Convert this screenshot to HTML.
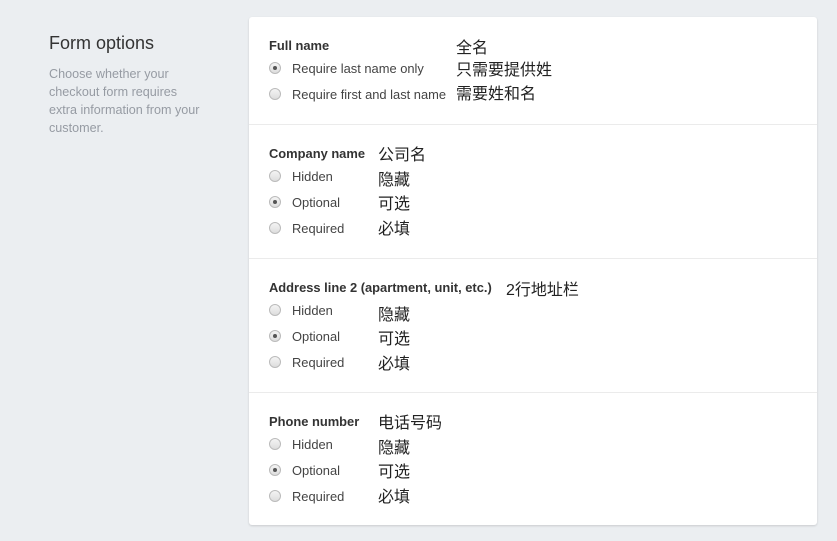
<!DOCTYPE html>
<html><head><meta charset="utf-8"><style>
*{margin:0;padding:0;box-sizing:border-box}
body{width:837px;height:541px;background:#ebeef1;font-family:"Liberation Sans","Noto Sans CJK SC",sans-serif;position:relative;overflow:hidden}
.a{position:absolute;white-space:nowrap}
h1{position:absolute;left:49px;top:33px;font-size:18px;font-weight:normal;color:#333}
.desc{position:absolute;left:49px;top:65px;white-space:nowrap;font-size:12.6px;line-height:18px;color:#969ba3}
.card{position:absolute;left:249px;top:17px;width:568px;height:508px;background:#fff;border-radius:3px;box-shadow:0 1px 2px rgba(0,0,0,.15)}
.sep{position:absolute;left:249px;width:568px;height:1px;background:#ebebeb}
.t{font-size:12.9px;font-weight:bold;color:#333}
.l{font-size:12.9px;color:#444}
.c{font-size:16px;color:#222}
.r{position:absolute;width:12px;height:12px;border-radius:50%;border:1px solid #bbb;background:linear-gradient(#f4f4f4,#ddd)}
.r.on::after{content:"";position:absolute;left:3px;top:3px;width:4px;height:4px;border-radius:50%;background:#555}
</style></head><body>
<h1>Form options</h1>
<div class="desc">Choose whether your<br>checkout form requires<br>extra information from your<br>customer.</div>
<div class="card"></div>
<div class="sep" style="top:124px"></div>
<div class="sep" style="top:258px"></div>
<div class="sep" style="top:392px"></div>

<div class="a t" style="left:269px;top:38px">Full name</div>
<div class="a c" style="left:456px;top:34px">全名</div>
<div class="r on" style="left:269px;top:62px"></div>
<div class="a l" style="left:292px;top:61px">Require last name only</div>
<div class="a c" style="left:456px;top:56px">只需要提供姓</div>
<div class="r" style="left:269px;top:88px"></div>
<div class="a l" style="left:292px;top:87px">Require first and last name</div>
<div class="a c" style="left:456px;top:80px">需要姓和名</div>

<div class="a t" style="left:269px;top:146px">Company name</div>
<div class="a c" style="left:378px;top:141px">公司名</div>
<div class="r" style="left:269px;top:170px"></div><div class="a l" style="left:292px;top:169px">Hidden</div><div class="a c" style="left:378px;top:166px">隐藏</div>
<div class="r on" style="left:269px;top:196px"></div><div class="a l" style="left:292px;top:195px">Optional</div><div class="a c" style="left:378px;top:190px">可选</div>
<div class="r" style="left:269px;top:222px"></div><div class="a l" style="left:292px;top:221px">Required</div><div class="a c" style="left:378px;top:215px">必填</div>

<div class="a t" style="left:269px;top:280px">Address line 2 (apartment, unit, etc.)</div>
<div class="a c" style="left:506px;top:276px">2行地址栏</div>
<div class="r" style="left:269px;top:304px"></div><div class="a l" style="left:292px;top:303px">Hidden</div><div class="a c" style="left:378px;top:301px">隐藏</div>
<div class="r on" style="left:269px;top:330px"></div><div class="a l" style="left:292px;top:329px">Optional</div><div class="a c" style="left:378px;top:325px">可选</div>
<div class="r" style="left:269px;top:356px"></div><div class="a l" style="left:292px;top:355px">Required</div><div class="a c" style="left:378px;top:350px">必填</div>

<div class="a t" style="left:269px;top:414px">Phone number</div>
<div class="a c" style="left:378px;top:409px">电话号码</div>
<div class="r" style="left:269px;top:438px"></div><div class="a l" style="left:292px;top:437px">Hidden</div><div class="a c" style="left:378px;top:434px">隐藏</div>
<div class="r on" style="left:269px;top:464px"></div><div class="a l" style="left:292px;top:463px">Optional</div><div class="a c" style="left:378px;top:458px">可选</div>
<div class="r" style="left:269px;top:490px"></div><div class="a l" style="left:292px;top:489px">Required</div><div class="a c" style="left:378px;top:483px">必填</div>
</body></html>
